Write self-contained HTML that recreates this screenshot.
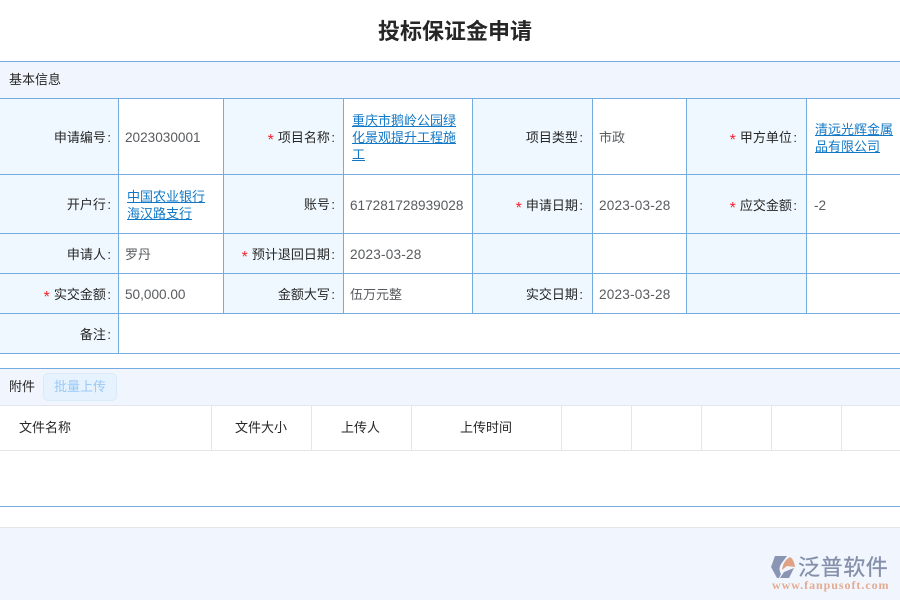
<!DOCTYPE html>
<html lang="zh"><head><meta charset="utf-8"><title>投标保证金申请</title>
<style>
html,body{margin:0;padding:0}
body{width:900px;height:600px;position:relative;overflow:hidden;background:#fff;font-family:"Liberation Sans","Microsoft YaHei","Noto Sans CJK SC",sans-serif;font-size:13px;color:#333}
div,a{position:absolute}
.h{left:0;width:900px;height:1px;background:#74acdf}
.v{width:1px;background:#74acdf}
.g{background:#e4e6e9}
.bg{background:#f0f8ff}
.t{white-space:nowrap;line-height:18px;height:18px}
.l{text-align:right;color:#262626;white-space:nowrap;line-height:18px;height:18px}
.l u{text-decoration:none;margin-left:1.5px}
.l i{font-style:normal;color:#f5222d;margin-right:4px;font-size:16px;position:relative;top:3px;line-height:0}
.val{color:#595b5e;white-space:nowrap;line-height:18px;height:18px}
.n{font-size:13.6px}
a.k{color:#1278c6;text-decoration:underline;white-space:nowrap;line-height:17px}
</style></head><body>
<div class="t" style="left:0;width:910px;top:16px;height:30px;line-height:30px;text-align:center;font-size:22px;font-weight:bold;color:#262626;padding-top:1px">投标保证金申请</div>

<div style="left:0;top:62px;width:900px;height:36px;background:#f1f6fe"></div>
<div class="bg" style="left:0;top:99px;width:118px;height:254px"></div>
<div class="bg" style="left:224px;top:99px;width:119px;height:214px"></div>
<div class="bg" style="left:473px;top:99px;width:119px;height:214px"></div>
<div class="bg" style="left:687px;top:99px;width:119px;height:214px"></div>
<div style="left:0;top:369px;width:900px;height:36px;background:#f1f6fe"></div>
<div style="left:0;top:528px;width:900px;height:72px;background:#f1f6fe"></div>

<div class="h" style="top:61px"></div>
<div class="h" style="top:98px"></div>
<div class="h" style="top:174px"></div>
<div class="h" style="top:233px"></div>
<div class="h" style="top:273px"></div>
<div class="h" style="top:313px"></div>
<div class="h" style="top:353px"></div>
<div class="h" style="top:368px"></div>
<div class="h" style="top:506px"></div>
<div class="v" style="left:118px;top:98px;height:255px"></div>
<div class="v" style="left:223px;top:98px;height:215px"></div>
<div class="v" style="left:343px;top:98px;height:215px"></div>
<div class="v" style="left:472px;top:98px;height:215px"></div>
<div class="v" style="left:592px;top:98px;height:215px"></div>
<div class="v" style="left:686px;top:98px;height:215px"></div>
<div class="v" style="left:806px;top:98px;height:215px"></div>

<div class="h g" style="top:405px"></div>
<div class="h g" style="top:450px"></div>
<div class="h g" style="top:527px"></div>
<div class="v g" style="left:211px;top:405px;height:45px"></div>
<div class="v g" style="left:311px;top:405px;height:45px"></div>
<div class="v g" style="left:411px;top:405px;height:45px"></div>
<div class="v g" style="left:561px;top:405px;height:45px"></div>
<div class="v g" style="left:631px;top:405px;height:45px"></div>
<div class="v g" style="left:701px;top:405px;height:45px"></div>
<div class="v g" style="left:771px;top:405px;height:45px"></div>
<div class="v g" style="left:841px;top:405px;height:45px"></div>

<div class="t" style="left:9px;top:71px;color:#262626">基本信息</div>

<div class="l" style="right:789px;top:129px">申请编号<u>:</u></div>
<div class="val n" style="left:125px;top:129px">2023030001</div>
<div class="l" style="right:565px;top:129px"><i>*</i>项目名称<u>:</u></div>
<a class="k" style="left:352px;top:112px">重庆市鹅岭公园绿<br>化景观提升工程施<br>工</a>
<div class="l" style="right:317px;top:129px">项目类型<u>:</u></div>
<div class="val" style="left:599px;top:129px">市政</div>
<div class="l" style="right:103px;top:129px"><i>*</i>甲方单位<u>:</u></div>
<a class="k" style="left:815px;top:121px">清远光辉金属<br>品有限公司</a>

<div class="l" style="right:789px;top:196px">开户行<u>:</u></div>
<a class="k" style="left:127px;top:188px">中国农业银行<br>海汉路支行</a>
<div class="l" style="right:565px;top:196px">账号<u>:</u></div>
<div class="val n" style="left:350px;top:197px">617281728939028</div>
<div class="l" style="right:317px;top:197px"><i>*</i>申请日期<u>:</u></div>
<div class="val n" style="left:599px;top:197px;letter-spacing:.2px">2023-03-28</div>
<div class="l" style="right:103px;top:197px"><i>*</i>应交金额<u>:</u></div>
<div class="val n" style="left:814px;top:197px">-2</div>

<div class="l" style="right:789px;top:246px">申请人<u>:</u></div>
<div class="val" style="left:125px;top:246px">罗丹</div>
<div class="l" style="right:565px;top:246px"><i>*</i>预计退回日期<u>:</u></div>
<div class="val n" style="left:350px;top:246px;letter-spacing:.2px">2023-03-28</div>

<div class="l" style="right:789px;top:286px"><i>*</i>实交金额<u>:</u></div>
<div class="val n" style="left:125px;top:286px">50,000.00</div>
<div class="l" style="right:565px;top:286px">金额大写<u>:</u></div>
<div class="val" style="left:350px;top:286px">伍万元整</div>
<div class="l" style="right:317px;top:286px">实交日期<u>:</u></div>
<div class="val n" style="left:599px;top:286px;letter-spacing:.2px">2023-03-28</div>

<div class="l" style="right:789px;top:326px">备注<u>:</u></div>

<div class="t" style="left:9px;top:378px;color:#262626">附件</div>
<div style="left:43px;top:373px;width:72px;height:26px;background:#e6f2fd;border:1px solid #d9ebfb;border-radius:5px;color:#99c9f7;text-align:center;line-height:26px">批量上传</div>

<div class="t" style="left:19px;top:419px;color:#262626">文件名称</div>
<div class="t" style="left:235px;top:419px;color:#262626">文件大小</div>
<div class="t" style="left:341px;top:419px;color:#262626">上传人</div>
<div class="t" style="left:460px;top:419px;color:#262626">上传时间</div>

<svg style="position:absolute;left:770px;top:555px;filter:blur(.35px)" width="28" height="25" viewBox="0 0 28 25">
<path d="M5 1H17L11 9Q8 14 11 19L9 23H7L1 12Z" fill="#8995b2"/>
<path d="M12 15Q13 6 20 2Q24 4 25 12L17 11Z" fill="#e0a285"/>
<path d="M10 23L14 17L24 13L19 23Z" fill="#8995b2"/>
</svg>
<div class="t" style="left:798px;top:554px;height:28px;line-height:28px;font-size:22px;letter-spacing:.6px;color:#8490ab;-webkit-text-stroke:.3px #8490ab;filter:blur(.35px);font-family:'Liberation Sans','Noto Sans CJK SC',sans-serif">泛普软件</div>
<div class="t" style="left:772px;top:578px;height:14px;line-height:14px;font-size:12px;letter-spacing:.95px;font-weight:bold;color:#e3ab91;filter:blur(.3px);font-family:'Liberation Serif',serif">www.fanpusoft.com</div>
</body></html>
